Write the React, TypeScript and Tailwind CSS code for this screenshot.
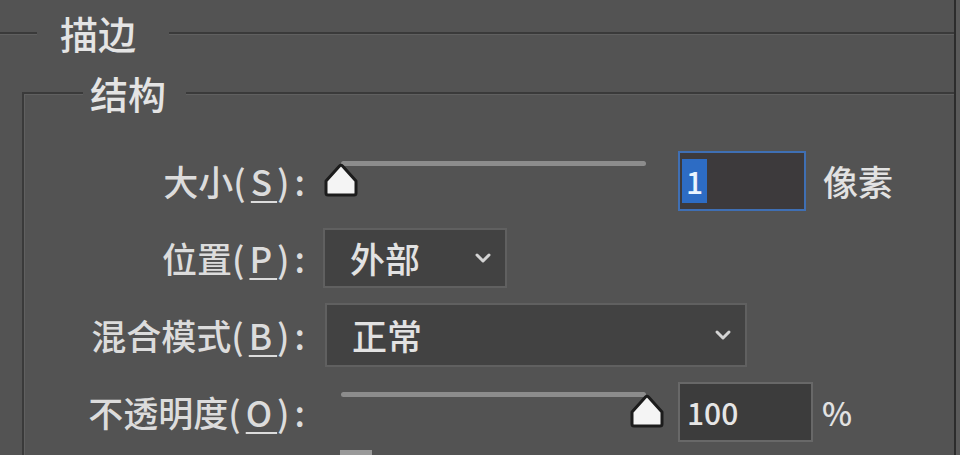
import { ChevronDown } from "lucide-react";

const font = "font-['Noto_Sans_CJK_SC','Noto_Sans',sans-serif]";

function Thumb() {
  return (
    <svg width="40" height="36" viewBox="0 0 40 36">
      <path
        d="M18.5 4 Q20 2.5 21.5 4 L35 19 L35 31 Q35 33 33 33 L7 33 Q5 33 5 31 L5 19 Z"
        fill="#f4f4f4"
        stroke="#1c1c1c"
        strokeWidth="3"
        strokeLinejoin="round"
      />
    </svg>
  );
}

function Slider({ value }: { value: number }) {
  // track runs from thumb centre at 0 to thumb centre at 100
  const left = Math.round((value / 100) * 306);
  return (
    <div className="relative h-[44px] w-[346px] shrink-0">
      <div className="absolute left-[20px] right-[21px] top-[2px] h-[5px] rounded-full bg-[#8c8c8c]" />
      <div className="absolute top-[3px]" style={{ left }}>
        <Thumb />
      </div>
    </div>
  );
}

function Label({ text, hot }: { text: string; hot: string }) {
  return (
    <div className="w-[286px] shrink-0 text-right text-[35px] font-medium leading-none text-[#dcdcdc]">
      {text}
      <span className="tracking-[5px]">
        (<span className="underline decoration-2 underline-offset-[5px]">{hot}</span>):
      </span>
    </div>
  );
}

function Select({ value, width, height }: { value: string; width: string; height: string }) {
  return (
    <div
      className={`flex items-center justify-between border-2 border-[#606060] bg-[#424242] pl-[25px] pr-[10px] ${width} ${height}`}
    >
      <span className="text-[35px] font-medium leading-none text-[#e2e2e2]">{value}</span>
      <ChevronDown size={24} strokeWidth={3} color="#d4d4d4" />
    </div>
  );
}

export default function App() {
  return (
    <div className={`flex h-[455px] w-[960px] overflow-hidden bg-[#535353] ${font}`}>
      <div className="min-w-0 flex-1">
        <fieldset className="mt-[13px] border-t-2 border-[#3a3a3a] shadow-[inset_0_1px_0_#606060]">
          <legend className="ml-[37px] bg-[#535353] pl-[23px] pr-[33px] text-[38px] font-medium leading-[40px] text-[#e4e4e4]">
            描边
          </legend>
          <fieldset className="ml-[22px] mt-[20px] border-l-2 border-t-2 border-[#3a3a3a] shadow-[inset_1px_1px_0_#606060]">
            <legend className="ml-[59px] bg-[#535353] pl-[7px] pr-[20px] text-[38px] font-medium leading-[40px] text-[#e4e4e4]">
              结构
            </legend>
            <div className="pt-[29px]">
              <div className="flex h-[77px] items-center">
                <Label text="大小" hot="S" />
                <div className="ml-[11px]">
                  <Slider value={0} />
                </div>
                <div className="ml-[11px] flex h-[60px] w-[128px] items-center border-2 border-[#3f6fb4] bg-[#3d3a3c] pl-[2px]">
                  <span className="bg-[#2d6cc4] px-[4px] text-[30px] font-medium leading-[44px] text-[#eaf4ff]">1</span>
                </div>
                <span className="ml-[17px] text-[35px] font-medium leading-none text-[#e2e2e2]">像素</span>
              </div>
              <div className="flex h-[77px] items-center">
                <Label text="位置" hot="P" />
                <div className="ml-[13px]">
                  <Select value="外部" width="w-[184px]" height="h-[60px]" />
                </div>
              </div>
              <div className="flex h-[77px] items-center">
                <Label text="混合模式" hot="B" />
                <div className="ml-[15px]">
                  <Select value="正常" width="w-[422px]" height="h-[64px]" />
                </div>
              </div>
              <div className="flex h-[77px] items-center">
                <Label text="不透明度" hot="O" />
                <div className="ml-[11px]">
                  <Slider value={100} />
                </div>
                <div className="ml-[11px] flex h-[60px] w-[135px] items-center border-2 border-[#686868] bg-[#3c3c3c] pl-[7px]">
                  <span className="text-[30px] font-medium leading-none text-[#e6e6e6]">100</span>
                </div>
                <span className="ml-[9px] text-[32px] font-medium leading-none text-[#e2e2e2]">%</span>
              </div>
              <div className="h-[20px] pl-[316px]">
                <div className="h-[6px] w-[32px] bg-[#9a9a9a]" />
              </div>
            </div>
          </fieldset>
        </fieldset>
      </div>
      <div className="w-[2px] shrink-0 bg-[#2c2c2c]" />
      <div className="w-[4px] shrink-0 bg-[#5a5a5a]" />
    </div>
  );
}
